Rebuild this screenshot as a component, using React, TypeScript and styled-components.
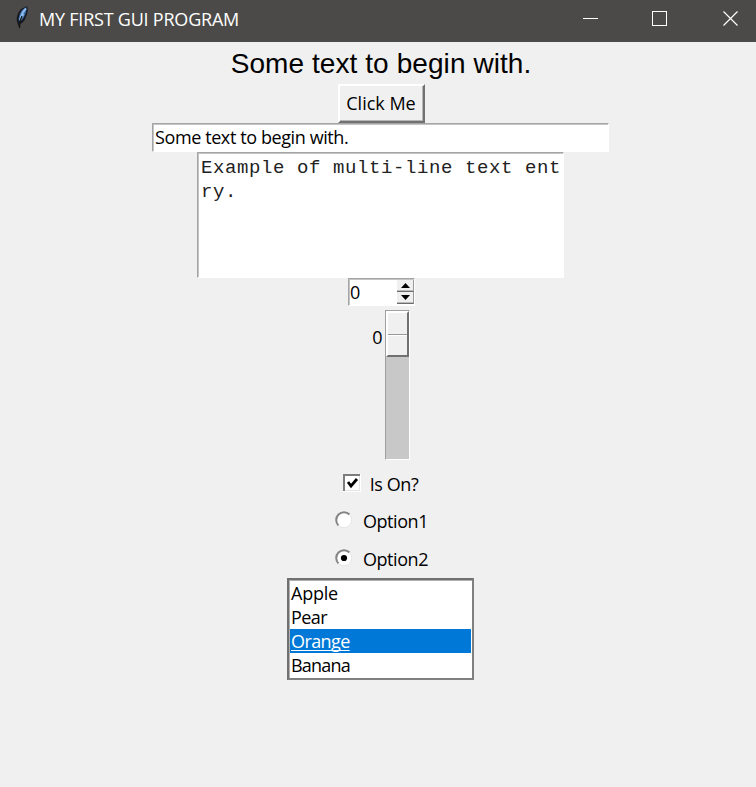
import React from "react";
import styled, { createGlobalStyle } from "styled-components";

const GlobalStyle = createGlobalStyle`
  * { box-sizing: border-box; }
  html, body { margin: 0; background: #f0f0f0; overflow: hidden; }
`;

const Window = styled.div`
  width: 756px;
  height: 787px;
  display: flex;
  flex-direction: column;
  background: #f0f0f0;
  color: #000;
  font-family: "Open Sans", "Noto Sans", sans-serif;
  font-size: 18px;
  line-height: 24px;
  white-space: pre;
`;

const TitleBar = styled.header`
  height: 42px;
  flex: none;
  display: flex;
  align-items: flex-start;
  background: #4c4a48;
  color: #fff;
`;

const Feather = styled.svg`
  width: 16px;
  height: 26px;
  margin: 5px 0 0 14px;
`;

const Title = styled.div`
  margin: 7px auto 0 9px;
`;

const WindowButtons = styled.div`
  display: flex;
  padding: 11px 17px 0 0;
`;

const Glyph = styled.svg<{ $after?: number }>`
  width: 16px;
  height: 16px;
  margin-right: ${(p) => p.$after ?? 0}px;
  fill: none;
  stroke: #fff;
`;

const Label = styled.span<{ $spacing?: number }>`
  letter-spacing: ${(p) => p.$spacing ?? -0.4}px;
`;

const Content = styled.main`
  width: 761px;
  display: flex;
  flex-direction: column;
  align-items: center;
`;

const Heading = styled.div`
  height: 42px;
  padding: 6px 0 0 1px;
  font: 28px/32px "Liberation Sans", Arial, sans-serif;
  letter-spacing: 0.08px;
`;

const PushButton = styled.button`
  width: 87px;
  height: 39px;
  margin-left: 1px;
  padding: 0 0 1px;
  border-style: solid;
  border-width: 2px;
  border-color: #fff #717171 #717171 #fff;
  background: #f0f0f0;
  box-shadow: inset -1px -1px #b5b5b5;
  font: inherit;
  color: #000;
`;

const Sunken = styled.div`
  background: #fff;
  border-style: solid;
  border-width: 1px;
  border-color: #a5a5a5 #fff #fff #a5a5a5;
  box-shadow: inset 1px 1px #c4c4c4;
`;

const Entry = styled(Sunken)`
  width: 457px;
  height: 29px;
  padding: 1px 2px;
`;

const TextArea = styled(Sunken)`
  width: 367px;
  height: 126px;
  padding: 3px 3px 0;
  font: 19px/24px "Liberation Mono", "Courier New", monospace;
  letter-spacing: 0.598px;
  color: #222;
`;

const SpinBox = styled(Sunken)`
  width: 67px;
  height: 28px;
  margin-left: 2px;
  display: flex;
  justify-content: space-between;
  padding: 1px 0 0 1px;
`;

const Steppers = styled.div`
  width: 17px;
  height: 25px;
  display: flex;
  flex-direction: column;
`;

const Stepper = styled.div`
  height: 12px;
  display: flex;
  align-items: center;
  justify-content: center;
  background: #f0f0f0;
  border-right: 1px solid #999;
  border-bottom: 1px solid #6e6e6e;
  box-shadow: inset 0 -1px #bbb;
`;

const Arrow = styled.svg`
  width: 9px;
  height: 5px;
`;

const Scale = styled.div`
  display: flex;
  height: 150px;
  margin: 4px 0 0 21px;
  gap: 2px;
`;

const ScaleValue = styled.div`
  padding-top: 15px;
`;

const Trough = styled.div`
  width: 25px;
  height: 150px;
  background: #c8c8c8;
  border-style: solid;
  border-width: 1px;
  border-color: #a0a0a0 #fff #fff #a0a0a0;
`;

const Thumb = styled.div`
  height: 46px;
  display: flex;
  flex-direction: column;
  background: #f0f0f0;
  border-style: solid;
  border-width: 2px;
  border-color: #fff #707070 #707070 #fff;
  &::before {
    content: "";
    height: 21px;
    border-bottom: 1px solid #999;
    box-shadow: 0 1px #fff;
  }
`;

const Choice = styled.div<{ $top: number; $gap: number; $left?: number }>`
  display: flex;
  align-items: flex-start;
  height: 24px;
  margin-top: ${(p) => p.$top}px;
  margin-left: ${(p) => p.$left ?? 0}px;
  gap: ${(p) => p.$gap}px;
`;

const Mark = styled.svg`
  width: 18px;
  height: 18px;
  margin-top: 2px;
`;

const ListBox = styled.div`
  width: 187px;
  height: 102px;
  margin-top: 7px;
  padding: 1px 0 0 1px;
  background: #fff;
  border: 2px solid #808080;
  border-top-color: #707070;
  border-left-color: #707070;
  box-shadow: inset 1px 1px #b0b0b0;
`;

const Item = styled.div<{ $selected?: boolean }>`
  height: 24px;
  margin-right: 1px;
  padding-left: 1px;
  background: ${(p) => (p.$selected ? "#0078d7" : "transparent")};
  color: ${(p) => (p.$selected ? "#fff" : "#000")};
  text-decoration: ${(p) => (p.$selected ? "underline" : "none")};
  text-decoration-thickness: 1px;
  text-underline-offset: 2px;
  text-decoration-skip-ink: none;
`;

const Radio = ({ on }: { on?: boolean }) => (
  <Mark viewBox="0 0 18 18">
    <circle cx="9" cy="9" r="7.500" fill="#fff" />
    <path d="M3.500 14.500A7.500 7.500 0 0 1 14.500 3.500" fill="none" stroke="#858585" strokeWidth="2" />
    <path d="M14.500 3.500A7.500 7.500 0 0 1 3.500 14.500" fill="none" stroke="#e6e6e6" strokeWidth="1" />
    {on && <circle cx="9" cy="9" r="3.100" fill="#000" />}
  </Mark>
);

export default function App() {
  return (
    <Window>
      <GlobalStyle />
      <TitleBar>
        <Feather viewBox="0 0 16 26">
          <path d="M5.500 24L3 17Q1.500 10 7 4L13 1Q15 5 12 12Q10 18 5.500 19Z" fill="#171a20" />
          <path d="M5 17Q4 11 8 5L12.500 2Q13 7 10 12Q8 16 5 17Z" fill="#3b6ea9" />
          <path d="M6.500 14Q7.500 8 12 3.500M5.500 15L9.500 9" fill="none" stroke="#8fbcea" strokeWidth="1.800" />
          <path d="M5.500 23L6 16L8 11" fill="none" stroke="#111" strokeWidth="1.200" />
        </Feather>
        <Title><Label $spacing={-0.22}>MY FIRST GUI PROGRAM</Label></Title>
        <WindowButtons>
          <Glyph $after={53} viewBox="0 0 16 16"><path d="M0 7.500H15" /></Glyph>
          <Glyph $after={55} viewBox="0 0 16 16"><rect x=".5" y=".5" width="14" height="14" /></Glyph>
          <Glyph viewBox="0 0 16 16"><path d="M.5.500L14.500 14.500M14.500.500L.5 14.500" strokeWidth="1.200" /></Glyph>
        </WindowButtons>
      </TitleBar>
      <Content>
        <Heading>Some text to begin with.</Heading>
        <PushButton><Label $spacing={0}>Click Me</Label></PushButton>
        <Entry><Label>Some text to begin with.</Label></Entry>
        <TextArea>{"Example of multi-line text ent\nry."}</TextArea>
        <SpinBox>
          <Label>0</Label>
          <Steppers>
            <Stepper><Arrow viewBox="0 0 9 5"><path d="M0 5L4.500 0L9 5Z" /></Arrow></Stepper>
            <Stepper><Arrow viewBox="0 0 9 5"><path d="M0 0L4.500 5L9 0Z" /></Arrow></Stepper>
          </Steppers>
        </SpinBox>
        <Scale>
          <ScaleValue>0</ScaleValue>
          <Trough><Thumb /></Trough>
        </Scale>
        <Choice $top={12} $gap={9}>
          <Mark viewBox="0 0 18 18">
            <rect width="18" height="18" fill="#fff" />
            <path d="M1 17V1H17" fill="none" stroke="#7d7d7d" strokeWidth="2" />
            <path d="M2 16.500H16.500V2" fill="none" stroke="#e5e5e5" />
            <path d="M5 8L8 12L14 5" fill="none" stroke="#000" strokeWidth="2.800" />
          </Mark>
          <Label>Is On?</Label>
        </Choice>
        <Choice $top={13} $gap={10} $left={2}><Radio /><Label $spacing={-0.45}>Option1</Label></Choice>
        <Choice $top={14} $gap={10} $left={2}><Radio on /><Label $spacing={-0.45}>Option2</Label></Choice>
        <ListBox>
          <Item><Label $spacing={-0.25}>Apple</Label></Item>
          <Item><Label $spacing={-0.6}>Pear</Label></Item>
          <Item $selected><Label $spacing={-0.6}>Orange</Label></Item>
          <Item><Label $spacing={-0.8}>Banana</Label></Item>
        </ListBox>
      </Content>
    </Window>
  );
}
